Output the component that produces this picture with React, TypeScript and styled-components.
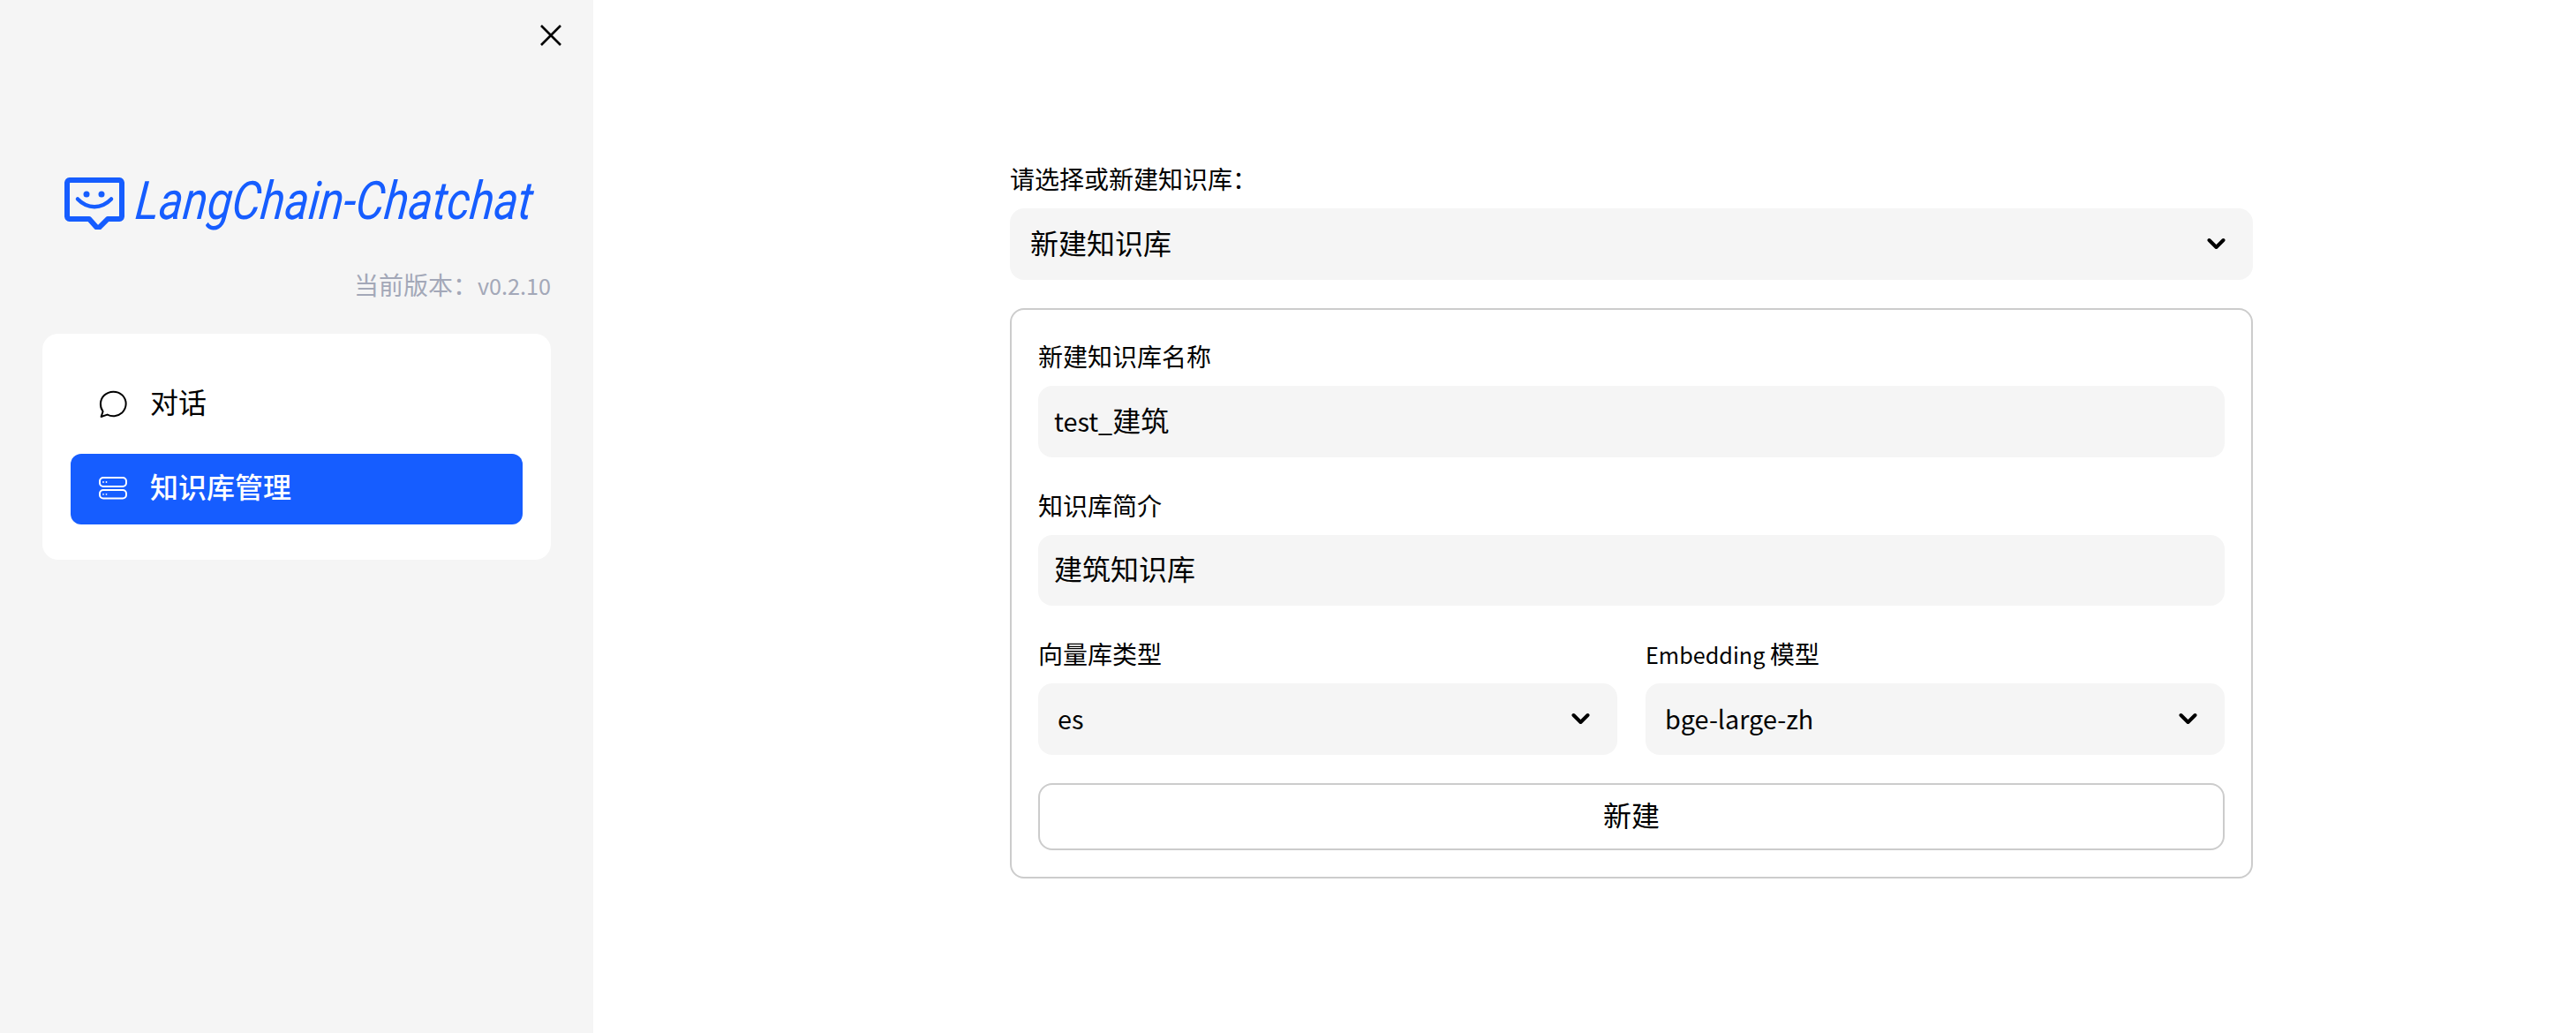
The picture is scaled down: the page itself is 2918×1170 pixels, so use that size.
import React from "react";
import styled, { createGlobalStyle } from "styled-components";

const BLUE = "#165dff";

const GlobalStyle = createGlobalStyle`
  html, body {
    margin: 0;
    padding: 0;
    background: #ffffff;
  }
  body {
    font-family: "Noto Sans CJK SC", "Noto Sans", sans-serif;
    color: #000000;
  }
`;

const Page = styled.div`
  display: flex;
  height: 1170px;
  overflow: hidden;
`;

const Sidebar = styled.aside`
  width: 672px;
  flex: none;
  box-sizing: border-box;
  background: #f5f5f5;
  padding: 28px 48px 0;
  display: flex;
  flex-direction: column;
`;

const CloseButton = styled.button`
  align-self: flex-end;
  width: 24px;
  height: 24px;
  margin-right: -12px;
  padding: 0;
  border: 0;
  background: none;
  display: block;
  svg {
    display: block;
  }
`;

const Logo = styled.div`
  display: flex;
  align-items: flex-start;
  height: 60px;
  margin: 149px 0 0 25px;
  gap: 10px;
  color: ${BLUE};
  svg {
    display: block;
    flex: none;
  }
`;

const LogoText = styled.span`
  display: inline-block;
  margin-top: -3px;
  font-family: "Roboto", sans-serif;
  font-style: italic;
  font-weight: 400;
  font-size: 60px;
  line-height: 60px;
  white-space: nowrap;
  transform-origin: left bottom;
  transform: skewX(-6deg) scaleX(0.855);
`;

const Version = styled.div`
  margin-top: 46px;
  height: 30px;
  line-height: 30px;
  font-size: 28px;
  text-align: right;
  color: #a3a8b8;
  white-space: nowrap;
`;

const Latin = styled.span`
  font-size: 0.9em;
`;

const NavCard = styled.nav`
  margin-top: 41px;
  height: 256px;
  box-sizing: border-box;
  background: #ffffff;
  border-radius: 18px;
  padding: 40px 32px;
  display: flex;
  flex-direction: column;
  gap: 16px;
`;

const NavItem = styled.div<{ $active?: boolean }>`
  height: 80px;
  border-radius: 12px;
  padding-left: 32px;
  display: flex;
  align-items: center;
  gap: 26px;
  font-size: 32px;
  font-weight: ${({ $active }) => ($active ? 500 : 400)};
  color: ${({ $active }) => ($active ? "#ffffff" : "#000000")};
  background: ${({ $active }) => ($active ? BLUE : "transparent")};
  svg {
    display: block;
    flex: none;
  }
`;

const NavLabel = styled.span`
  padding-bottom: 9px;
`;

const Main = styled.main`
  flex: 1;
  padding: 182px 0 0 472px;
`;

const Column = styled.div`
  width: 1408px;
`;

const FieldLabel = styled.label`
  display: block;
  height: 40px;
  line-height: 40px;
  margin-bottom: 14px;
  font-size: 28px;
  white-space: nowrap;
`;

const Well = styled.div<{ $inset: number }>`
  height: 80.5px;
  box-sizing: border-box;
  background: #f5f5f5;
  border-radius: 16px;
  padding: 0 31px 0 ${({ $inset }) => $inset}px;
  display: flex;
  align-items: center;
  justify-content: space-between;
  font-size: 32px;
  white-space: nowrap;
  svg {
    display: block;
    flex: none;
  }
`;

const WellText = styled.span`
  padding-bottom: 5px;
`;

const FormBox = styled.form`
  margin-top: 32.5px;
  height: 646px;
  box-sizing: border-box;
  border: 2px solid #cccccc;
  border-radius: 16px;
  padding: 32px 30px 0;
`;

const Field = styled.div<{ $last?: boolean }>`
  margin-bottom: ${({ $last }) => ($last ? 32 : 34)}px;
`;

const TwoColumns = styled.div`
  display: grid;
  grid-template-columns: 1fr 1fr;
  column-gap: 32px;
`;

const SubmitButton = styled.button`
  display: block;
  width: 100%;
  height: 76px;
  box-sizing: border-box;
  background: #ffffff;
  border: 2px solid #cccccc;
  border-radius: 16px;
  font-family: inherit;
  font-size: 32px;
  color: #000000;
  padding: 0 0 5px;
`;

function Chevron() {
  return (
    <svg width="21" height="14" viewBox="0 0 21 14" fill="none">
      <path
        d="M2.5 3 L10.5 11 L18.5 3"
        stroke="#000000"
        strokeWidth="4"
        strokeLinecap="round"
        strokeLinejoin="round"
      />
    </svg>
  );
}

function LogoMark() {
  return (
    <svg width="68" height="59" viewBox="0 0 68 59" fill="none">
      <path
        d="M6 3 H62 A3.5 3.5 0 0 1 65 6 V44 A3.5 3.5 0 0 1 62 47 H49 L40 56 A3 3 0 0 1 36 56 L28 47 H6 A3.5 3.5 0 0 1 3 44 V6 A3.5 3.5 0 0 1 6 3 Z"
        stroke={BLUE}
        strokeWidth="6"
        strokeLinejoin="round"
      />
      <circle cx="25" cy="19" r="3.5" fill={BLUE} />
      <circle cx="42" cy="19" r="3.5" fill={BLUE} />
      <path
        d="M15 24.5 C 26 36, 42 36, 53 24.5"
        stroke={BLUE}
        strokeWidth="4.5"
        strokeLinecap="round"
      />
    </svg>
  );
}

function ChatIcon() {
  return (
    <svg width="32" height="32" viewBox="0 0 32 32" fill="none">
      <path
        d="M4.6 24 C0.6 18.6 1 10.8 6 5.8 C11.8 0.4 20.8 0.4 26.4 5.4 C32.2 11.2 32 20 26.2 25.4 C21 30 14.4 30.2 9.6 27.6 L2.6 30 Z"
        stroke="#000000"
        strokeWidth="2"
        strokeLinejoin="round"
      />
    </svg>
  );
}

function DatabaseIcon() {
  return (
    <svg width="32" height="32" viewBox="0 0 32 32" fill="none">
      <rect x="1" y="3" width="30" height="10" rx="4" stroke="#ffffff" strokeWidth="2" />
      <rect x="1" y="17" width="30" height="9.5" rx="4" stroke="#ffffff" strokeWidth="2" />
      <circle cx="5" cy="8" r="0.9" fill="#ffffff" />
      <circle cx="8.5" cy="8" r="0.9" fill="#ffffff" />
      <circle cx="5" cy="21.8" r="0.9" fill="#ffffff" />
      <circle cx="8.5" cy="21.8" r="0.9" fill="#ffffff" />
    </svg>
  );
}

export default function App() {
  return (
    <Page>
      <GlobalStyle />
      <Sidebar>
        <CloseButton type="button" aria-label="close">
          <svg width="24" height="24" viewBox="0 0 24 24" fill="none">
            <path d="M1 1 L23 23 M23 1 L1 23" stroke="#000000" strokeWidth="2.6" />
          </svg>
        </CloseButton>
        <Logo>
          <LogoMark />
          <LogoText>LangChain-Chatchat</LogoText>
        </Logo>
        <Version>
          当前版本：<Latin>v0.2.10</Latin>
        </Version>
        <NavCard>
          <NavItem>
            <ChatIcon />
            <NavLabel>对话</NavLabel>
          </NavItem>
          <NavItem $active>
            <DatabaseIcon />
            <NavLabel>知识库管理</NavLabel>
          </NavItem>
        </NavCard>
      </Sidebar>
      <Main>
        <Column>
          <FieldLabel>请选择或新建知识库：</FieldLabel>
          <Well $inset={23}>
            <WellText>新建知识库</WellText>
            <Chevron />
          </Well>
          <FormBox>
            <Field>
              <FieldLabel>新建知识库名称</FieldLabel>
              <Well $inset={18}>
                <WellText>
                  <Latin>test_</Latin>建筑
                </WellText>
              </Well>
            </Field>
            <Field>
              <FieldLabel>知识库简介</FieldLabel>
              <Well $inset={18}>
                <WellText>建筑知识库</WellText>
              </Well>
            </Field>
            <TwoColumns>
              <Field $last>
                <FieldLabel>向量库类型</FieldLabel>
                <Well $inset={22}>
                  <WellText>
                    <Latin>es</Latin>
                  </WellText>
                  <Chevron />
                </Well>
              </Field>
              <Field $last>
                <FieldLabel>
                  <Latin>Embedding </Latin>模型
                </FieldLabel>
                <Well $inset={22}>
                  <WellText>
                    <Latin>bge-large-zh</Latin>
                  </WellText>
                  <Chevron />
                </Well>
              </Field>
            </TwoColumns>
            <SubmitButton type="button">新建</SubmitButton>
          </FormBox>
        </Column>
      </Main>
    </Page>
  );
}
